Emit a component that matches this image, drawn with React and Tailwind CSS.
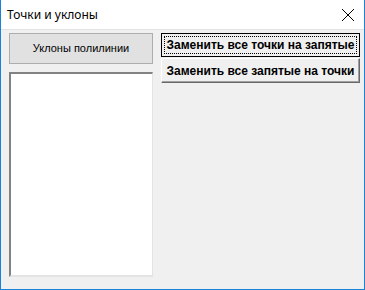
import React from 'react';

const App = () => {
  return (
    <div className="w-[365px] h-[290px] flex flex-col bg-[#f0f0f0] border-x border-b border-[#1883d7] overflow-hidden" style={{ fontFamily: '"Liberation Sans", Arial, sans-serif' }}>
      <div className="h-[30px] shrink-0 bg-white flex items-center justify-between pl-[6px] pr-[6px] border-b border-[#e3e3e3]">
        <span className="text-[12px] text-black" style={{ fontFamily: '"Noto Sans", sans-serif' }}>Точки и уклоны</span>
        <svg width="14" height="14" viewBox="0 0 14 14" className="mr-[3px]">
          <path d="M1 1L13 13M13 1L1 13" stroke="#000" strokeWidth="1" />
        </svg>
      </div>
      <div className="flex pl-[8px] pt-[3px] gap-[8px]">
        <div className="w-[144px] flex flex-col gap-[8px]">
          <button className="h-[31px] w-full bg-[#e1e1e1] border border-[#adadad] text-[11px] text-black">
            Уклоны полилинии
          </button>
          <div className="h-[205px] w-full bg-white border-t-2 border-l-2 border-r border-b-2 border-t-[#828282] border-l-[#828282] border-r-[#e3e3e3] border-b-[#e3e3e3]" />
        </div>
        <div className="w-[199px] flex flex-col gap-[1px]">
          <button className="h-[24px] w-full bg-[#f0f0f0] border border-black p-[2px] text-[12px] font-bold text-black">
            <div className="h-full w-full border border-dotted border-black flex items-center justify-center">
              Заменить все точки на запятые
            </div>
          </button>
          <button className="h-[25px] w-full bg-[#f0f0f0] border border-t-white border-l-white border-r-[#696969] border-b-[#696969] shadow-[inset_-1px_-1px_0_#a0a0a0] text-[12px] font-bold text-black flex items-center justify-center">
            Заменить все запятые на точки
          </button>
        </div>
      </div>
    </div>
  );
};

export default App;
